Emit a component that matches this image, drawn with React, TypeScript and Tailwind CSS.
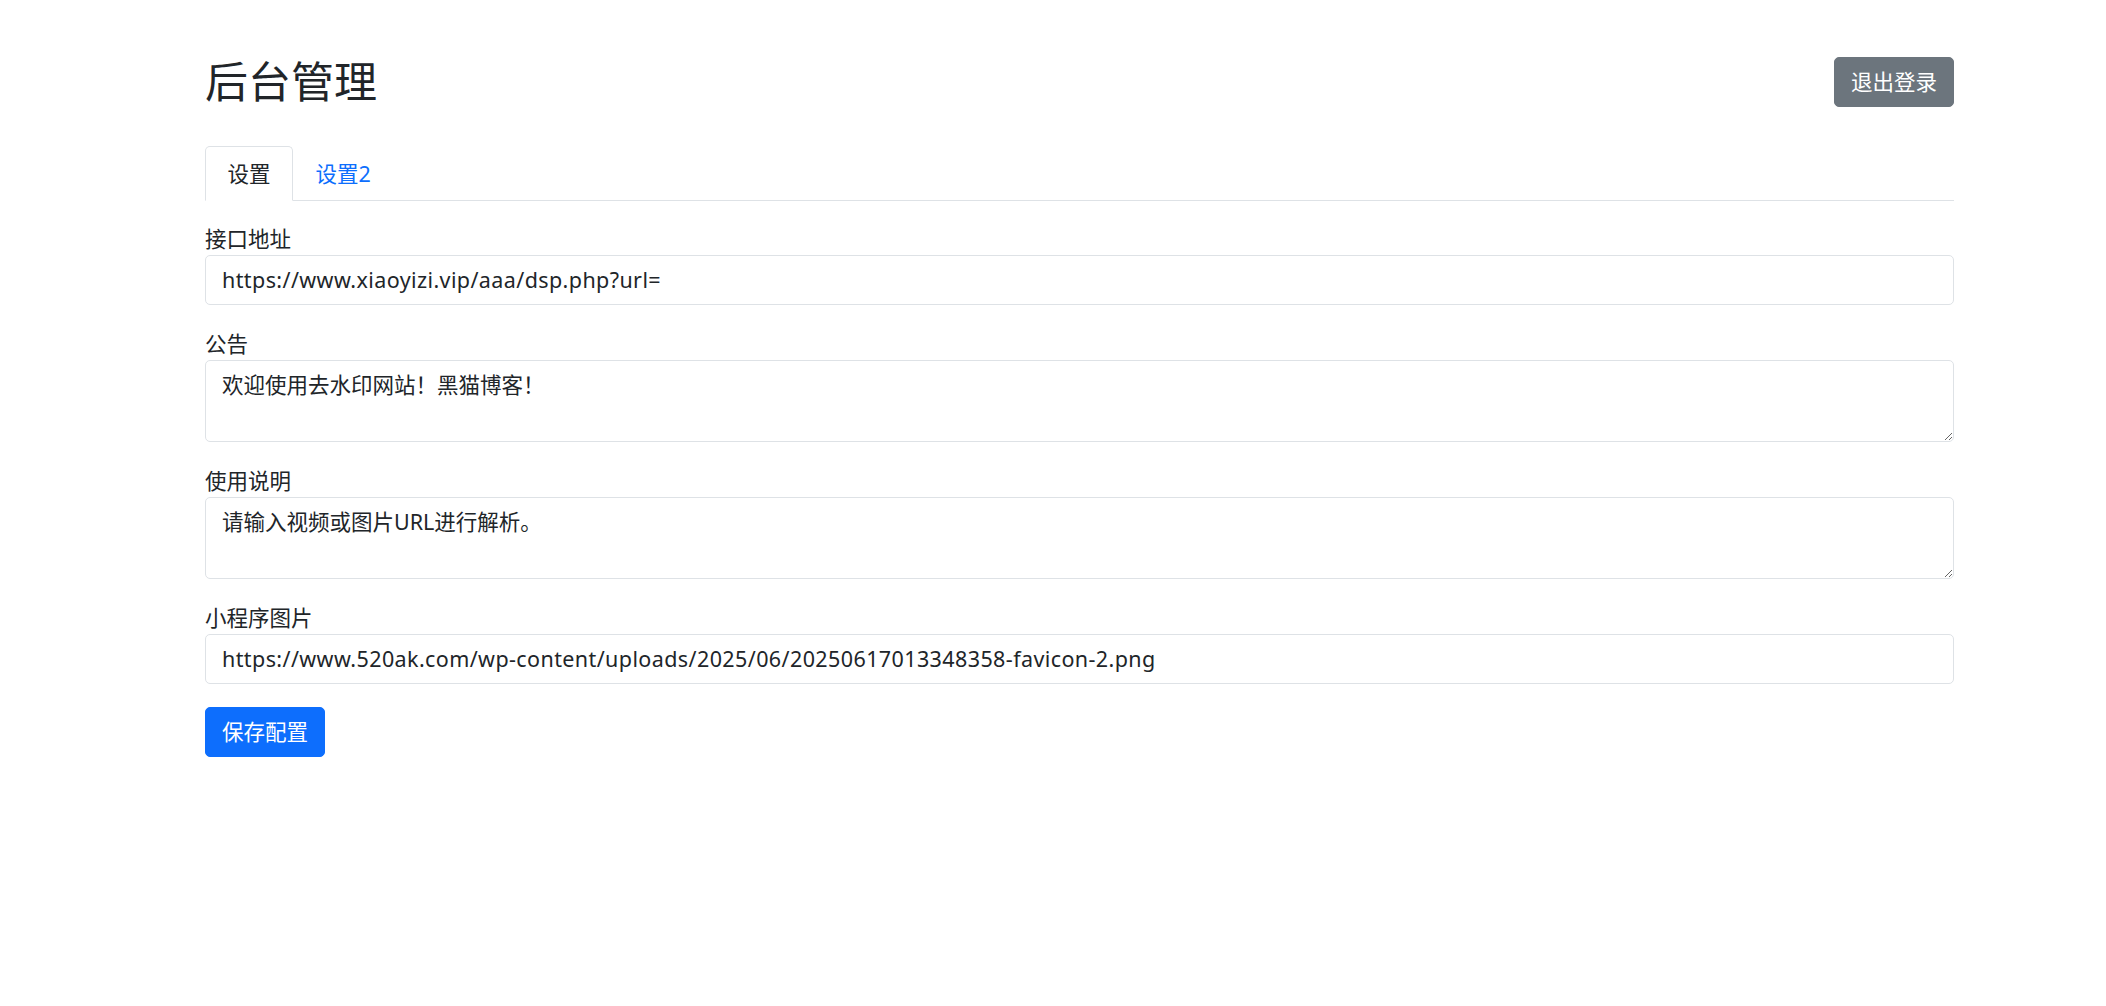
import React from "react";

const font = { fontFamily: '"Noto Sans", "Noto Sans CJK SC", sans-serif' };

export default function App() {
  const inputCls =
    "block w-full border border-[#dee2e6] rounded-[5px] px-[16px] py-[8px] text-[21.5px] leading-[32px] text-[#212529] bg-white outline-none";
  const labelCls = "block text-[21.5px] leading-[32px] text-[#212529] mb-0";
  return (
    <div className="min-h-[1006px] bg-white" style={font}>
      <div className="ml-[205px] w-[1749px] pt-[56px]">
        <div className="flex items-center justify-between h-[52px]">
          <h2 className="text-[43px] leading-[52px] font-normal text-[#212529]">后台管理</h2>
          <button className="h-[50px] w-[120px] rounded-[5px] bg-[#6c757d] text-white text-[21.5px] leading-[32px] border border-[#6c757d]">
            退出登录
          </button>
        </div>
        <div className="mt-[38px] flex border-b border-[#dee2e6]">
          <div className="-mb-px px-[21.5px] py-[10.7px] text-[21.5px] leading-[32px] text-[#212529] border border-[#dee2e6] border-b-white rounded-t-[5px] bg-white">
            设置
          </div>
          <div className="-mb-px px-[21.5px] py-[10.7px] text-[21.5px] leading-[32px] text-[#0d6efd] border border-transparent">
            设置2
          </div>
        </div>
        <div className="pt-[22px]">
          <div className="mb-[23px]">
            <label className={labelCls}>接口地址</label>
            <input className={inputCls + " tracking-[0.4px]"} defaultValue="https://www.xiaoyizi.vip/aaa/dsp.php?url=" />
          </div>
          <div className="mb-[23px]">
            <label className={labelCls}>公告</label>
            <textarea rows={2} className={inputCls} defaultValue="欢迎使用去水印网站！黑猫博客！" />
          </div>
          <div className="mb-[23px]">
            <label className={labelCls}>使用说明</label>
            <textarea rows={2} className={inputCls} defaultValue="请输入视频或图片URL进行解析。" />
          </div>
          <div className="mb-[23px]">
            <label className={labelCls}>小程序图片</label>
            <input
              className={inputCls + " tracking-[0.4px]"}
              defaultValue="https://www.520ak.com/wp-content/uploads/2025/06/20250617013348358-favicon-2.png"
            />
          </div>
          <button className="h-[50px] w-[120px] rounded-[5px] bg-[#0d6efd] text-white text-[21.5px] leading-[32px] border border-[#0d6efd]">
            保存配置
          </button>
        </div>
      </div>
    </div>
  );
}
